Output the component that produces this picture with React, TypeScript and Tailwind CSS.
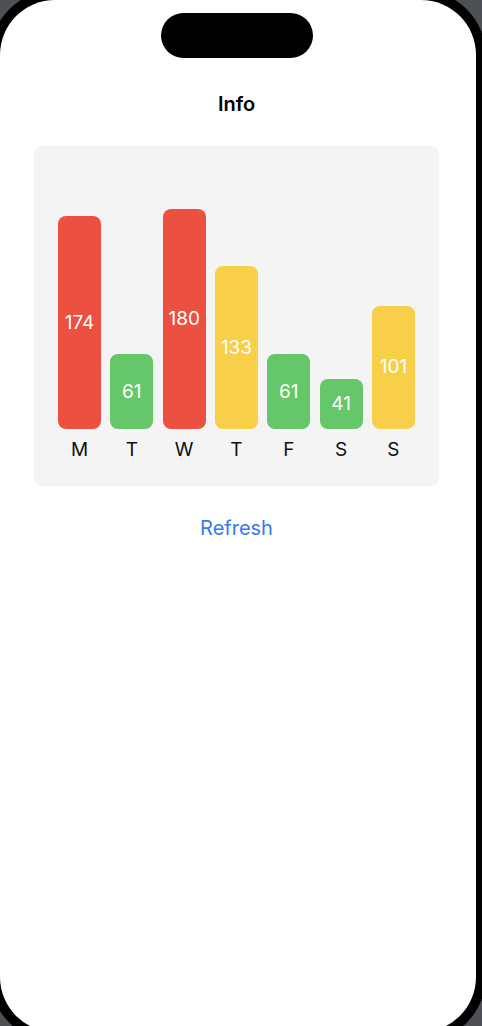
import React from "react";

const data = [
  { d: "M", v: 174, c: "bg-[#EC5040]" },
  { d: "T", v: 61, c: "bg-[#66C66A]" },
  { d: "W", v: 180, c: "bg-[#EC5040]" },
  { d: "T", v: 133, c: "bg-[#F8CF48]" },
  { d: "F", v: 61, c: "bg-[#66C66A]" },
  { d: "S", v: 41, c: "bg-[#66C66A]" },
  { d: "S", v: 101, c: "bg-[#F8CF48]" },
];

export default function App() {
  return (
    <div className="w-[482px] h-[1026px] overflow-hidden bg-[#4d5055] font-['Inter',sans-serif]">
      <div className="-ml-[10px] -mt-[10px] w-[496px] h-[1052px] rounded-[66px] bg-black p-[10px]">
        <div className="w-[476px] h-[1032px] rounded-[55px] bg-white flex flex-col items-center pr-[3px]">
          <div className="mt-[13px] w-[152px] h-[45px] rounded-full bg-black" />
          <div className="mt-[34px] text-[20px] leading-[24px] font-semibold text-black">Info</div>
          <div className="mt-[30px] w-[405px] rounded-[8px] bg-[#F4F4F4] pt-[63px] pb-[25px] px-[24px]">
            <div className="flex justify-between">
              {data.map((b, i) => (
                <div key={i} className="flex flex-col items-center w-[43px]">
                  <div className="h-[220px] w-full flex items-end">
                    <div
                      className={`w-full rounded-[8px] ${b.c} flex items-center justify-center text-white text-[19px] leading-[22px]`}
                      style={{ height: `${(b.v * 220) / 180}px` }}
                    >
                      {b.v}
                    </div>
                  </div>
                  <div className="mt-[10px] text-[19px] leading-[22px] text-[#111]">{b.d}</div>
                </div>
              ))}
            </div>
          </div>
          <div className="mt-[30px] text-[20px] leading-[24px] text-[#3478F6]">Refresh</div>
        </div>
      </div>
    </div>
  );
}
